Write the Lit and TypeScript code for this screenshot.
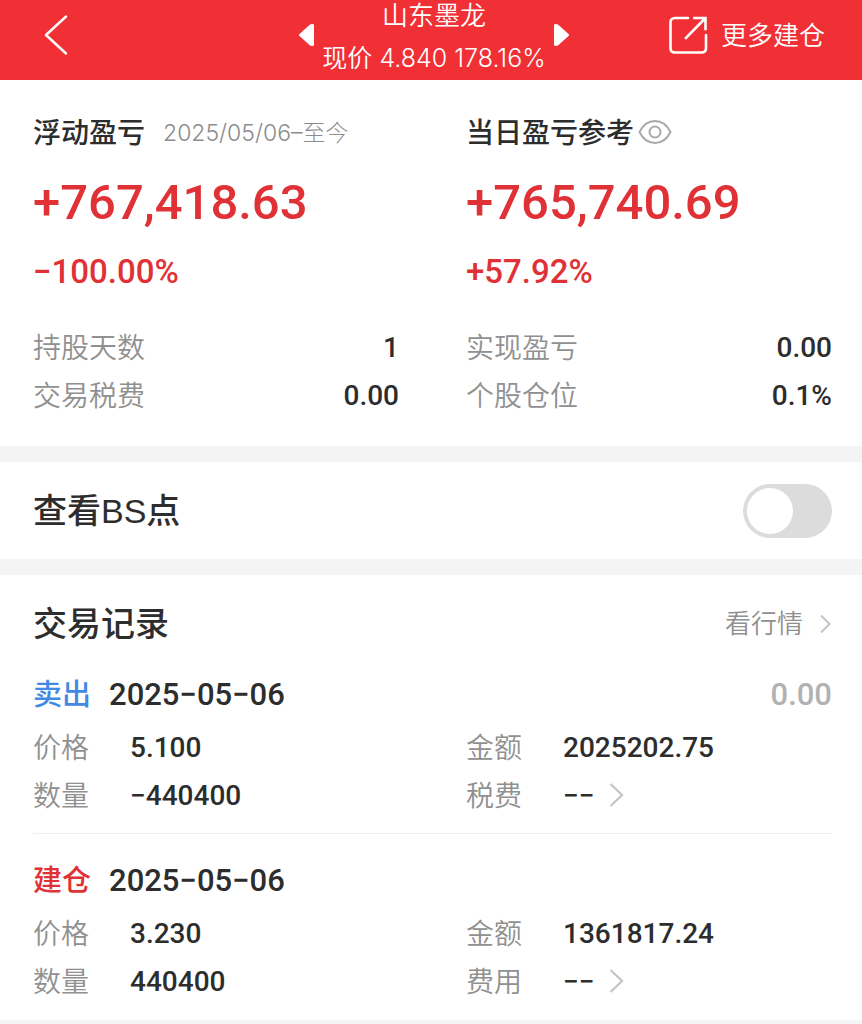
import { LitElement, html, css, nothing } from "lit";
import { customElement, property, state } from "lit/decorators.js";

interface Fact {
  label: string;
  value: string;
}

interface Trade {
  kind: "sell" | "open";
  tag: string;
  date: string;
  profit?: string;
  price: string;
  amount: string;
  quantity: string;
  feeLabel: string;
  fee: string;
}

const trades: Trade[] = [
  {
    kind: "sell",
    tag: "卖出",
    date: "2025−05−06",
    profit: "0.00",
    price: "5.100",
    amount: "2025202.75",
    quantity: "−440400",
    feeLabel: "税费",
    fee: "−−",
  },
  {
    kind: "open",
    tag: "建仓",
    date: "2025−05−06",
    price: "3.230",
    amount: "1361817.24",
    quantity: "440400",
    feeLabel: "费用",
    fee: "−−",
  },
];

@customElement("position-header")
export class PositionHeader extends LitElement {
  static styles = css`
    :host {
      display: block;
      background: #f13036;
      color: #fff;
    }
    .bar {
      display: grid;
      grid-template-columns: 1fr auto 1fr;
      align-items: center;
      padding: 0 37px 8px 43px;
    }
    button,
    a {
      display: flex;
      align-items: center;
      margin: 0;
      padding: 0;
      border: 0;
      background: none;
      color: inherit;
      font: inherit;
      text-decoration: none;
      cursor: pointer;
    }
    svg {
      display: block;
    }
    .stock {
      display: flex;
      align-items: center;
      gap: 7px;
    }
    .names {
      display: flex;
      flex-direction: column;
      gap: 14px;
      padding-top: 2px;
      text-align: center;
      line-height: 28px;
      white-space: nowrap;
    }
    .name {
      margin: 0;
      font-size: 26px;
      font-weight: 350;
    }
    .price {
      margin: 0;
      font-size: 25px;
      font-weight: 350;
    }
    .more {
      justify-self: end;
      gap: 13px;
      font-size: 26px;
      font-weight: 350;
      line-height: 32px;
      white-space: nowrap;
    }
  `;

  render() {
    return html`
      <header class="bar">
        <button aria-label="返回">
          <svg width="26" height="42" viewBox="0 0 26 42" fill="none" stroke="#fff" stroke-width="2.4" stroke-linecap="round" stroke-linejoin="round">
            <path d="M23 1.500 3 20 23 38.500" />
          </svg>
        </button>
        <div class="stock">
          <button aria-label="上一只">
            <svg width="17" height="24" viewBox="0 0 17 24" fill="#fff" stroke="#fff" stroke-width="3" stroke-linejoin="round">
              <path d="M14.500 1.500V20.500L12.500 20 2.500 11 12.500 2Z" />
            </svg>
          </button>
          <div class="names">
            <h1 class="name">山东墨龙</h1>
            <p class="price">现价 4.840 178.16%</p>
          </div>
          <button aria-label="下一只">
            <svg width="17" height="24" viewBox="0 0 17 24" fill="#fff" stroke="#fff" stroke-width="3" stroke-linejoin="round">
              <path d="M2.500 1.500V20.500L4.500 20 14.500 11 4.500 2Z" />
            </svg>
          </button>
        </div>
        <a class="more" href="#more">
          <svg width="40" height="40" viewBox="0 0 40 40" fill="none" stroke="#fff" stroke-width="2.6" stroke-linecap="round">
            <path d="M20 2H7Q2.500 2 2.500 6.500V32Q2.500 36.500 7 36.500H33.500Q38 36.500 38 32V19" />
            <path d="M18 22 37 2.500M26.500 2H37.500V13" stroke-linecap="square" />
          </svg>
          更多建仓
        </a>
      </header>
    `;
  }
}

@customElement("profit-panel")
export class ProfitPanel extends LitElement {
  @property() heading = "";
  @property() range = "";
  @property() total = "";
  @property() percent = "";
  @property({ type: Boolean }) eye = false;
  @property({ attribute: false }) facts: Fact[] = [];

  static styles = css`
    :host {
      display: block;
      min-width: 0;
    }
    .head {
      display: flex;
      align-items: center;
      line-height: 40px;
      white-space: nowrap;
    }
    .heading {
      margin: 0;
      font-size: 28px;
      font-weight: 500;
    }
    .range {
      margin-left: 18px;
      font-size: 23px;
      font-weight: 300;
      color: #8c8c8c;
    }
    .eye {
      margin: 0 0 0 4px;
      padding: 0;
      border: 0;
      background: none;
      cursor: pointer;
    }
    svg {
      display: block;
    }
    .total,
    .percent {
      margin: 0;
      color: #e03236;
      font-family: Roboto, sans-serif;
      font-weight: 500;
    }
    .total {
      margin-top: 20px;
      font-size: 49px;
      line-height: 60px;
    }
    .percent {
      margin-top: 19px;
      font-size: 33px;
      line-height: 40px;
    }
    .facts {
      margin: 32px 0 0;
    }
    .fact {
      display: flex;
      justify-content: space-between;
      font-size: 28px;
      line-height: 48px;
    }
    .label {
      font-weight: 350;
      color: #909090;
    }
    .value {
      margin: 0;
      font-family: Roboto, sans-serif;
      font-weight: 500;
    }
  `;

  render() {
    return html`
      <div class="head">
        <h2 class="heading">${this.heading}</h2>
        ${this.range ? html`<span class="range">${this.range}</span>` : nothing}
        ${this.eye
          ? html`<button class="eye" aria-label="显示或隐藏">
              <svg width="34" height="26" viewBox="0 0 34 26" fill="none" stroke="#aaa" stroke-width="2">
                <path d="M1.500 12C5 5 10.500 1 17 1S29 5 32.500 12C29 19 23.500 23 17 23S5 19 1.500 12Z" />
                <circle cx="17" cy="12" r="5.500" />
              </svg>
            </button>`
          : nothing}
      </div>
      <p class="total">${this.total}</p>
      <p class="percent">${this.percent}</p>
      <dl class="facts">
        ${this.facts.map(
          (f) => html`<div class="fact">
            <dt class="label">${f.label}</dt>
            <dd class="value">${f.value}</dd>
          </div>`,
        )}
      </dl>
    `;
  }
}

@customElement("trade-entry")
export class TradeEntry extends LitElement {
  @property({ attribute: false }) trade!: Trade;

  static styles = css`
    :host {
      display: block;
      padding: 21px 0 13px;
      border-bottom: 1px solid #efefef;
    }
    :host(:last-of-type) {
      border-color: transparent;
    }
    .head {
      display: flex;
      align-items: center;
      margin-bottom: 3px;
      font-size: 31px;
      line-height: 52px;
    }
    .tag {
      margin-right: 18px;
      font-size: 29px;
      font-weight: 500;
    }
    .sell {
      color: #4189e4;
    }
    .open {
      color: #e03236;
    }
    .num {
      font-family: Roboto, sans-serif;
      font-weight: 500;
    }
    .profit {
      margin-left: auto;
      color: #b2b2b2;
    }
    .grid {
      display: grid;
      grid-template-columns: 1fr 1fr;
      column-gap: 67px;
      margin: 0;
      font-size: 28px;
      line-height: 48px;
    }
    .cell {
      display: flex;
    }
    .label {
      width: 97px;
      font-weight: 350;
      color: #909090;
    }
    .value {
      margin: 0;
    }
    .fee {
      display: flex;
      align-items: center;
      gap: 14px;
      color: inherit;
      text-decoration: none;
    }
    svg {
      display: block;
    }
  `;

  render() {
    const t = this.trade;
    return html`
      <div class="head">
        <span class="tag ${t.kind}">${t.tag}</span>
        <time class="num" datetime="2025-05-06">${t.date}</time>
        ${t.profit ? html`<span class="num profit">${t.profit}</span>` : nothing}
      </div>
      <dl class="grid">
        <div class="cell"><dt class="label">价格</dt><dd class="value num">${t.price}</dd></div>
        <div class="cell"><dt class="label">金额</dt><dd class="value num">${t.amount}</dd></div>
        <div class="cell"><dt class="label">数量</dt><dd class="value num">${t.quantity}</dd></div>
        <div class="cell">
          <dt class="label">${t.feeLabel}</dt>
          <dd class="value num">
            <a class="fee" href="#fee" aria-label=${t.feeLabel}>
              ${t.fee}
              <svg width="15" height="26" viewBox="0 0 15 26" fill="none" stroke="#c4c4c4" stroke-width="2.2">
                <path d="M1.500 1 13 12 1.500 23" />
              </svg>
            </a>
          </dd>
        </div>
      </dl>
    `;
  }
}

@customElement("app-root")
export class AppRoot extends LitElement {
  @state() private showPoints = false;

  static styles = css`
    :host {
      display: block;
      min-height: 100vh;
      background: #f4f4f4;
      color: #2d2d2d;
      font-family: Inter, "Noto Sans CJK SC", sans-serif;
    }
    .section {
      margin-bottom: 16px;
      padding: 0 30px 0 33px;
      background: #fff;
    }
    .summary {
      display: grid;
      grid-template-columns: 1fr 1fr;
      column-gap: 67px;
      padding-top: 33px;
      padding-bottom: 26px;
    }
    .points {
      display: flex;
      align-items: center;
      justify-content: space-between;
      height: 97px;
      font-family: "Liberation Sans", "Noto Sans CJK SC", sans-serif;
      font-size: 34px;
      font-weight: 500;
      line-height: 48px;
    }
    .switch {
      appearance: none;
      display: flex;
      align-items: center;
      box-sizing: border-box;
      width: 89px;
      height: 54px;
      margin: 0;
      padding: 4px;
      border-radius: 27px;
      background: #dcdcdc;
      cursor: pointer;
    }
    .switch::before {
      content: "";
      width: 46px;
      height: 46px;
      border-radius: 50%;
      background: #fff;
    }
    .switch:checked {
      justify-content: flex-end;
      background: #f13036;
    }
    .records {
      padding-top: 25px;
    }
    .records-head {
      display: flex;
      align-items: center;
      justify-content: space-between;
      line-height: 48px;
    }
    .title {
      margin: 0;
      font-size: 34px;
      font-weight: 500;
    }
    .quote {
      display: flex;
      align-items: center;
      gap: 16px;
      color: #909090;
      font-size: 26px;
      font-weight: 350;
      text-decoration: none;
    }
    svg {
      display: block;
    }
  `;

  private toggle(e: Event) {
    this.showPoints = (e.target as HTMLInputElement).checked;
  }

  render() {
    return html`
      <position-header></position-header>
      <main>
        <section class="section summary">
          <profit-panel
            heading="浮动盈亏"
            range="2025/05/06–至今"
            total="+767,418.63"
            percent="−100.00%"
            .facts=${[
              { label: "持股天数", value: "1" },
              { label: "交易税费", value: "0.00" },
            ]}
          ></profit-panel>
          <profit-panel
            heading="当日盈亏参考"
            total="+765,740.69"
            percent="+57.92%"
            eye
            .facts=${[
              { label: "实现盈亏", value: "0.00" },
              { label: "个股仓位", value: "0.1%" },
            ]}
          ></profit-panel>
        </section>
        <section class="section points">
          <label for="points">查看BS点</label>
          <input id="points" class="switch" type="checkbox" role="switch" .checked=${this.showPoints} @change=${this.toggle} />
        </section>
        <section class="section records">
          <div class="records-head">
            <h2 class="title">交易记录</h2>
            <a class="quote" href="#quote">
              看行情
              <svg width="13" height="20" viewBox="0 0 13 20" fill="none" stroke="#c4c4c4" stroke-width="2">
                <path d="M2 1.500 10.500 10 2 18.500" />
              </svg>
            </a>
          </div>
          ${trades.map((t) => html`<trade-entry .trade=${t}></trade-entry>`)}
        </section>
      </main>
    `;
  }
}
